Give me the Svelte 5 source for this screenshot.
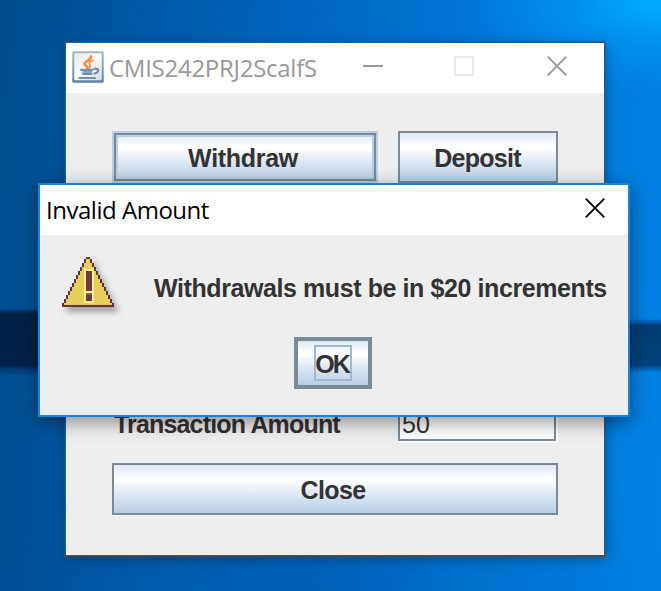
<script>
  const rows = Array.from({ length: 23 }, (_, i) => {
    const step = Math.ceil((i + 1) / 2);
    return { y: i + 1, left: 12 - step, right: 13 + step };
  });
</script>

<div class="desktop">
  <div class="band left"></div>
  <div class="band right"></div>

  <section class="window main">
    <header class="titlebar">
      <svg class="java" width="32" height="32" viewBox="0 0 32 32">
        <defs>
          <linearGradient id="frame" x1="0" y1="0" x2="0" y2="1">
            <stop offset="0" stop-color="#a9bac7" />
            <stop offset="1" stop-color="#5f82a0" />
          </linearGradient>
          <linearGradient id="plate" x1="0" y1="0" x2="1" y2="1">
            <stop offset="0" stop-color="#e4e8ec" />
            <stop offset=".5" stop-color="#fbfbfb" />
            <stop offset="1" stop-color="#d5dde5" />
          </linearGradient>
        </defs>
        <rect x=".3" y=".3" width="31.4" height="31.4" rx="1.5" fill="url(#frame)" />
        <rect x="2.2" y="2.2" width="27.6" height="27" rx="1.5" fill="url(#plate)" />
        <g fill="none" stroke-linecap="round">
          <path d="M19 5.500C20 9 12 10 12.500 13C13 15 15.500 15 15.500 17" stroke="#ee8a35" stroke-width="2.600" />
          <path d="M21 9.500C17.500 10.500 16.500 12 17.800 13.600C18.600 14.800 18 16 17 17" stroke="#f09c55" stroke-width="2.100" />
          <path d="M9 18.800H20.500M11 23H19.500M7.500 27H23" stroke="#6f8ea9" stroke-width="2.200" />
          <path d="M22.500 17.800C27.800 17 27 21.500 22.500 22.500" stroke="#6f8ea9" stroke-width="2.200" />
          <path d="M11 21H19.500" stroke="#8ea7bd" stroke-width="2" />
        </g>
      </svg>
      <span class="title">CMIS242PRJ2ScalfS</span>
      <div class="controls">
        <svg width="20" height="20"><rect y="9" width="20" height="2" fill="#999" /></svg>
        <svg width="20" height="20"><rect x="1" y="1" width="18" height="18" fill="none" stroke="#e9e9e9" stroke-width="2" /></svg>
        <svg width="20" height="20"><path d="M.7.7L19.300 19.300M19.300.7L.7 19.300" stroke="#999" stroke-width="1.900" /></svg>
      </div>
    </header>
    <div class="content">
      <div class="row">
        <button class="metal hot"><span>Withdraw</span></button>
        <button class="metal deposit"><span>Deposit</span></button>
      </div>
      <div class="row amount">
        <span class="label">Transaction Amount</span>
        <div class="field"><span>50</span></div>
      </div>
      <button class="metal close"><span>Close</span></button>
    </div>
  </section>

  <section class="window dialog">
    <header class="titlebar">
      <span class="title">Invalid Amount</span>
      <svg class="x" width="20" height="20"><path d="M.7.7L19.300 19.300M19.300.7L.7 19.300" stroke="#000" stroke-width="1.900" /></svg>
    </header>
    <div class="message">
      <svg class="warn" width="52" height="50" viewBox="0 0 26 25" shape-rendering="crispEdges">
        {#each rows as r}
          <rect x={r.left} y={r.y} width={r.right - r.left + 1} height="1" fill="#663333" />
          <rect x={r.left + 1} y={r.y} width={r.right - r.left - 1} height="1" fill="#e6cf5c" />
        {/each}
        <rect x="12" width="2" height="1" fill="#663333" />
        <rect y="24" width="26" height="1" fill="#663333" />
        <rect x="11" y="6" width="5" height="17" fill="#fff099" />
        <rect x="12" y="7" width="3" height="10" fill="#733c3c" />
        <rect x="12" y="18" width="3" height="4" fill="#733c3c" />
        <rect x="12" y="18" width="3" height="1" fill="#946041" />
      </svg>
      <span class="text">Withdrawals must be in $20 increments</span>
    </div>
    <button class="metal ok"><span class="focus">OK</span></button>
  </section>
</div>

<style>
  .desktop {
    position: relative;
    width: 661px;
    height: 591px;
    overflow: hidden;
    background:
      radial-gradient(ellipse 190px 90px at 661px 0, #00a8ff 10%, rgba(0, 160, 250, 0.5) 50%, rgba(0, 140, 240, 0) 100%),
      radial-gradient(ellipse 340px 200px at 330px 591px, rgba(0, 70, 140, 0.3), rgba(0, 70, 140, 0)),
      linear-gradient(95deg, #004c8b 0%, #0057a5 20%, #0068c2 45%, #0078da 70%, #0081e3 100%);
  }
  .band {
    position: absolute;
  }
  .band.left {
    left: 0;
    top: 309px;
    width: 66px;
    height: 66px;
    background: linear-gradient(#004c8c, #003365 2px, #002044 5px, #002248 57px, #003b73 60px, #00427f 63px, #004d8d);
  }
  .band.right {
    right: 0;
    top: 319px;
    width: 60px;
    height: 53px;
    background: linear-gradient(#0080e0, #0062b4 2px, #005aa6 4px, #003c74 6px, #00427c 46px, #0064b6 50px, #0078d6);
  }
  .window {
    position: absolute;
    box-sizing: border-box;
    background: #eee;
    font: bold 25px/28px "Liberation Sans", Arial, sans-serif;
    color: #333;
  }
  .main {
    left: 65px;
    top: 42px;
    width: 540px;
    height: 514px;
    border: 1px solid #0b65ae;
    box-shadow: 0 0 0 1px rgba(50, 75, 100, 0.65), 1px 3px 12px rgba(0, 0, 0, 0.3);
  }
  .dialog {
    left: 38px;
    top: 183px;
    width: 592px;
    height: 234px;
    border: 2px solid #1883d7;
    box-shadow: 0 5px 18px rgba(0, 0, 0, 0.42);
    display: flex;
    flex-direction: column;
  }
  .titlebar {
    display: flex;
    align-items: center;
    box-sizing: border-box;
    height: 50px;
    background: #fff;
  }
  .title {
    font: 24px/30px "Open Sans", "Noto Sans", sans-serif;
    white-space: nowrap;
  }
  .main .titlebar {
    padding: 0 37px 0 6px;
  }
  .main .title {
    color: #999;
    margin: 0 0 0 5px;
    letter-spacing: -0.27px;
  }
  .java {
    margin-top: -2px;
    flex: none;
  }
  .controls {
    display: flex;
    justify-content: space-between;
    width: 204px;
    flex: none;
    margin: -4px 0 0 auto;
  }
  .controls svg:nth-child(2) {
    margin-right: 2px;
  }
  .dialog .titlebar {
    padding: 0 23px 0 6px;
    color: #000;
  }
  .dialog .title {
    letter-spacing: -0.48px;
  }
  .x {
    margin: -4px 0 0 auto;
  }
  svg {
    display: block;
  }
  .content {
    display: flex;
    flex-direction: column;
    padding: 38px 46px 0;
  }
  .row {
    display: flex;
    justify-content: space-between;
  }
  .metal {
    display: flex;
    align-items: center;
    justify-content: center;
    box-sizing: border-box;
    height: 52px;
    padding: 2px 0 0;
    border: 2px solid #7a8a99;
    border-radius: 0;
    background: linear-gradient(#dde8f3, #fff 28%, #fff 32%, #dde8f3 60%, #b8cfe5);
    font: inherit;
    color: #333;
  }
  .hot {
    width: 266px;
    border-color: #b8cfe5;
    box-shadow: inset 0 0 0 2px #7a8a99, inset 0 0 0 4px #b8cfe5;
  }
  .hot span {
    margin-right: 4px;
    letter-spacing: -0.3px;
  }
  .deposit {
    width: 160px;
  }
  .deposit span {
    letter-spacing: -0.75px;
    margin-right: 1px;
  }
  .amount {
    margin-top: 216px;
    height: 44px;
  }
  .label {
    margin: 11px 0 0 2px;
    letter-spacing: -0.83px;
    white-space: nowrap;
  }
  .field {
    box-sizing: border-box;
    width: 160px;
    height: 44px;
    border: solid #fff;
    border-width: 0 2px 2px 0;
    background: #fff;
    font-weight: normal;
    box-shadow: inset 2px 2px #7a8a99, inset -2px -2px #7a8a99;
  }
  .field span {
    display: block;
    padding: 11px 0 0 4px;
    letter-spacing: 0.2px;
  }
  .close {
    margin-top: 20px;
  }
  .close span {
    margin-right: 4px;
    letter-spacing: -0.6px;
  }
  .message {
    display: flex;
    align-items: flex-start;
    padding: 22px 0 0 22px;
  }
  .warn {
    flex: none;
    filter: drop-shadow(4px 5px 3px rgba(0, 0, 0, 0.32));
  }
  .text {
    margin: 17px 0 0 40px;
    white-space: nowrap;
    letter-spacing: -0.41px;
  }
  .ok {
    align-self: flex-start;
    width: 78px;
    margin: 30px 0 0 254px;
    padding: 0;
    border-width: 4px;
  }
  .focus {
    box-sizing: border-box;
    width: 38px;
    height: 36px;
    border: 2px solid #a3b8cc;
    line-height: 34px;
    letter-spacing: -2px;
    padding-right: 2px;
    display: flex;
    justify-content: center;
  }
</style>
